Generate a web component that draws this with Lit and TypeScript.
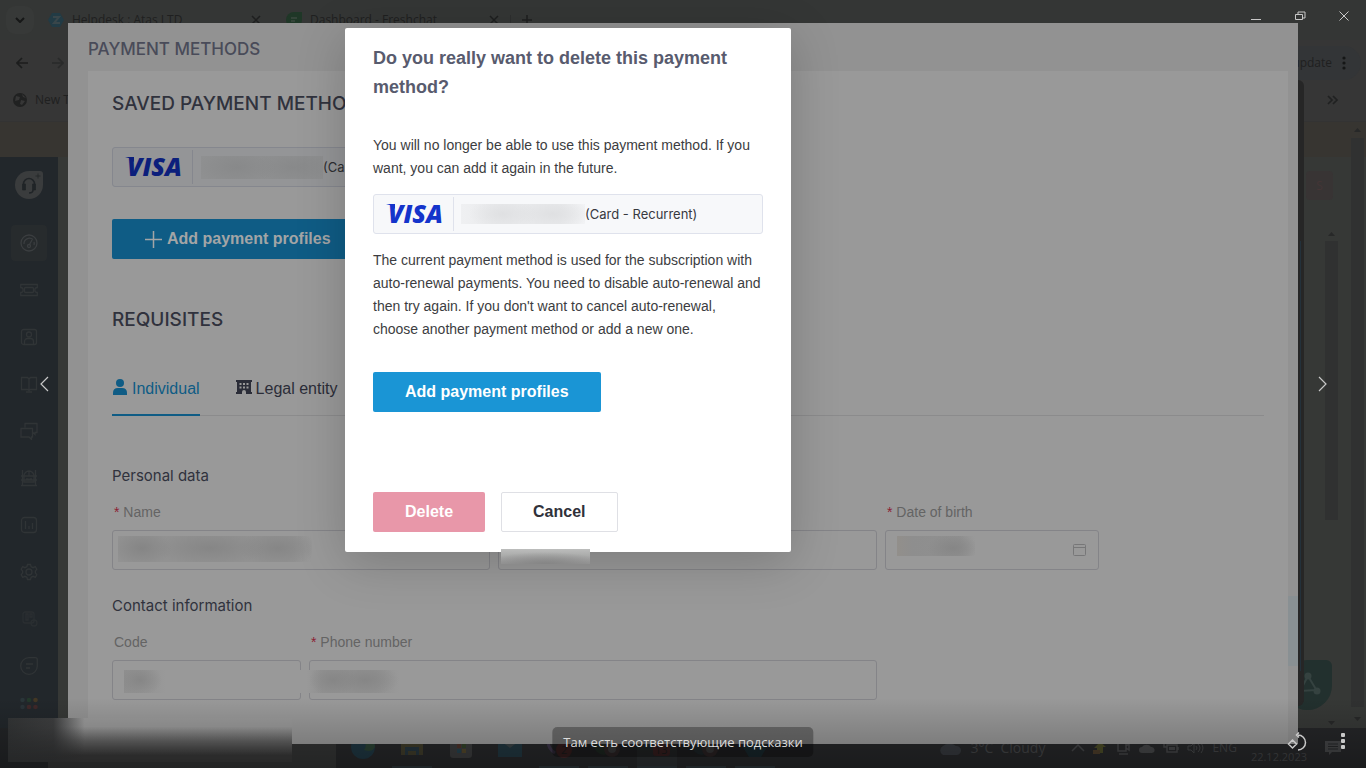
import { LitElement, html, css, svg, nothing } from "lit";
import { customElement, property } from "lit/decorators.js";

const icon = (w: number, h: number, body: unknown, cls = "ico") =>
  html`<svg class=${cls} width=${w} height=${h} viewBox="0 0 ${w} ${h}" aria-hidden="true">${body}</svg>`;

const railIcons = [
  svg`<circle cx="9" cy="9" r="8"/><path d="M4 10a5.500 5.500 0 0 1 9-4.500M9.500 10.500L12 6M14 8a5 5 0 0 1 0 3"/><circle cx="9" cy="12" r="1.500"/>`,
  svg`<path d="M.7 3.500h16.600v3a2.500 2.500 0 0 0 0 5v3H.7v-3a2.500 2.500 0 0 0 0-5z"/><rect x="4.500" y="6.500" width="9" height="5" rx="1"/>`,
  svg`<rect x="1.500" y="1.500" width="15" height="15" rx="2"/><circle cx="9" cy="6.500" r="2.500"/><path d="M4.500 16.500v-3a3 3 0 0 1 3-3h3a3 3 0 0 1 3 3v3"/>`,
  svg`<path d="M1.500 2.500h6L9 4l1.500-1.500h6v12h-6L9 15.500l-1.500-1h-6zM9 4v11M6 17h6"/>`,
  svg`<path d="M5 5.500v-4h12v9h-2v2l-2-2M1 6.500h11.500v8.500h-1v2.500l-2.500-2.500H1z"/>`,
  svg`<path d="M2.500 1v16M15.500 1v16M1 16.500h16M4 7a5 5 0 0 1 10 0v6H4zM1 7h16M1 11h16M9 2v5M6 10h2l1 1 1-1h2"/>`,
  svg`<rect x="1.500" y="1.500" width="15" height="15" rx="3"/><path d="M5.500 5v8M9 10v3M12.500 7v6"/>`,
  svg`<circle cx="9" cy="9" r="3"/><path d="M7.500 1.500h3l.6 2.200 2 1 2.200-1 1.500 2.600-1.400 1.700v2l1.400 1.700-1.500 2.600-2.200-1-2 1-.6 2.200h-3l-.6-2.200-2-1-2.200 1-1.500-2.600L2.600 10V8L1.200 6.300l1.500-2.600 2.200 1 2-1z"/>`,
  svg`<g opacity=".6"><rect x="3" y="2" width="11" height="11" rx="2"/><path d="M6 4h2v6H6zM10 4h2v3h-2z"/><circle cx="14" cy="13" r="3"/></g>`,
  svg`<path d="M9 .7h6.300a2 2 0 0 1 2 2V9A8.300 8.300 0 1 1 9 .7zM6 7h7M6 11h4"/>`,
];

@customElement("desktop-layer")
class DesktopLayer extends LitElement {
  static styles = css`
    :host { display: flex; flex-direction: column; min-width: 0; height: 100vh; background: #363636; color: #1f2020; font: 12px/16px "Open Sans", "Noto Sans", sans-serif; }
    svg { display: block; flex: none; }
    .tabs { display: flex; align-items: center; height: 40px; background: #343635; padding: 0 6px; }
    .search { display: grid; place-items: center; width: 28px; height: 28px; border-radius: 9px; background: #373938; margin-right: 6px; }
    .tab { display: flex; align-items: center; gap: 8px; box-sizing: border-box; width: 232px; padding: 0 11px 0 8px; }
    .tab span { flex: 1; white-space: nowrap; }
    .tab.next { width: 238px; padding-left: 14px; }
    .plus { border-left: 1px solid #2d2e2e; padding-left: 11px; }
    .bar { display: flex; align-items: center; height: 46px; padding: 0 5px 0 16px; gap: 24px; }
    .update { display: flex; align-items: center; justify-content: flex-end; gap: 10px; height: 34px; width: 90px; padding-right: 15px; margin-left: auto; border-radius: 17px; background: #333537; }
    .marks { display: flex; align-items: center; gap: 8px; height: 28px; padding: 0 27px 0 13px; }
    .marks svg:last-child { margin-left: auto; }
    .band { height: 36px; flex: none; background: #373531; border-top: 1px solid #333; box-sizing: border-box; margin-top: 7px; }
    .page { flex: 1; display: flex; justify-content: space-between; min-height: 0; background: #363836; }
    .rail { width: 58px; background: #22272b; display: flex; flex-direction: column; align-items: center; overflow: hidden; }
    .logo { margin: 13px 0 20px; }
    .cell { flex: none; display: grid; place-items: center; width: 36px; height: 36px; margin: 5px 0 6px; border-radius: 4px; }
    .cell.on { background: #272b2d; }
    .ico { fill: none; stroke: #303436; stroke-width: 1.3px; }
    .on .ico { stroke: #3b3e40; }
    .side { position: relative; width: 68px; }
    .device { position: absolute; left: 0; top: -77px; width: 6px; height: 626px; background: #262626; border-radius: 0 6px 6px 0; }
    .device::after { content: ""; position: absolute; left: 2px; top: 161px; width: 1px; height: 430px; background: #23313b; }
    .badge { position: absolute; left: 8px; top: 14px; width: 27px; height: 29px; line-height: 29px; border-radius: 4px; background: #383434; color: #443536; text-align: center; }
    .inner { position: absolute; left: 27px; top: 84px; width: 13px; height: 279px; background: #303131; }
    .outer { position: absolute; left: 53px; top: -19px; width: 13px; height: 569px; background: #303131; }
    .chat { position: absolute; left: -15px; top: 503px; width: 49px; height: 50px; border-radius: 25px 6px 25px 25px; background: #22302e; }
    .arrow { position: absolute; width: 7px; height: 4px; background: #272828; clip-path: polygon(0 100%, 50% 0, 100% 100%); }
    .arrow.down { clip-path: polygon(0 0, 50% 100%, 100% 0); }
    .a1 { left: 56px; top: -29px; }
    .a2 { left: 30px; top: 75px; }
    .a3 { left: 56px; top: 560px; }
    .a4 { left: 30px; top: 564px; }
    .task { display: flex; align-items: center; height: 40px; background: #252628; color: #414244; padding-right: 25px; }
    .start { width: 48px; align-self: stretch; background: #232527; }
    .find { width: 288px; align-self: stretch; background: #323333; }
    .apps { display: flex; align-self: stretch; padding-left: 7px; }
    .app { display: grid; place-items: center; width: 40px; margin-right: 9px; border-bottom: 2px solid transparent; }
    .app.run { border-color: #2c3438; }
    .app.on { background: #2a2d2f; }
    .tray { margin-left: auto; display: flex; align-items: center; gap: 8px; }
    .temp { font-size: 14px; margin-right: 18px; white-space: pre; }
    .clock { font-size: 11px; line-height: 18px; text-align: center; margin: 0 10px 0 6px; }
  `;

  render() {
    const x = icon(10, 10, svg`<path d="M1 1l8 8M9 1L1 9" stroke="#1e1f1f" stroke-width="1.5"/>`);
    return html`
      <div class="tabs">
        <div class="search">${icon(10, 6, svg`<path d="M1 1l4 4 4-4" fill="none" stroke="#161717" stroke-width="2"/>`, "")}</div>
        <div class="tab">
          ${icon(16, 16, svg`<path d="M4 1h8l4 7-4 7H4L0 8z" fill="#223b45"/><path d="M5 5h6l-5 6h6" fill="none" stroke="#39464a" stroke-width="2"/>`, "")}
          <span>Helpdesk : Atas LTD</span>${x}
        </div>
        <div class="tab next">
          ${icon(16, 16, svg`<path d="M8 0h8v8a8 8 0 1 1-8-8z" fill="#1f3727"/><path d="M5 6h6M5 9h4" stroke="#3d4a40" stroke-width="1.500"/>`, "")}
          <span>Dashboard - Freshchat</span>${x}
        </div>
        <div class="plus">${icon(10, 10, svg`<path d="M5 0v10M0 5h10" stroke="#1e1f1f" stroke-width="1.500"/>`, "")}</div>
      </div>
      <div class="bar">
        ${icon(12, 12, svg`<path d="M12 6H1M6 1L1 6l5 5" fill="none" stroke="#1c1d1d" stroke-width="1.700"/>`, "")}
        ${icon(12, 12, svg`<path d="M0 6h11M6 1l5 5-5 5" fill="none" stroke="#292a2a" stroke-width="1.700"/>`, "")}
        <div class="update"><span>update</span>${icon(4, 16, svg`<g fill="#151616"><circle cx="2" cy="3" r="1.600"/><circle cx="2" cy="8" r="1.600"/><circle cx="2" cy="13" r="1.600"/></g>`, "")}</div>
      </div>
      <div class="marks">
        ${icon(14, 14, svg`<circle cx="7" cy="7" r="7" fill="#202121"/><path d="M3 3l4 1-1 3-4 1M8 7l4 1-3 4-2-1zM9 1l1 3 3 1" fill="#363636"/>`, "")}
        <span>New Tab</span>
        ${icon(12, 10, svg`<path d="M1 1l4 4-4 4M6 1l4 4-4 4" fill="none" stroke="#202121" stroke-width="1.700"/>`, "")}
      </div>
      <div class="band"></div>
      <div class="page">
        <nav class="rail">
          ${icon(30, 30, svg`<path d="M15 1h11a3 3 0 0 1 3 3v11A14 14 0 1 1 15 1z" fill="#3a3c3d"/><path d="M9.500 18v-4a5.500 5.500 0 0 1 11 0v4M19 20q0 3-4 3" fill="none" stroke="#202427" stroke-width="1.500"/><path d="M8.500 14h3v6h-3zM18.500 14h3v6h-3zM24 3.500v5M21.500 6h5" fill="#202427" stroke="#202427" stroke-width=".7"/>`, "logo")}
          ${railIcons.map((g, i) => html`<div class="cell ${i === 0 ? "on" : ""}">${icon(18, 18, g)}</div>`)}
          ${icon(18, 20, svg`<g><circle cx="2.500" cy="10" r="2.300" fill="#2a3539"/><circle cx="9" cy="10" r="2.300" fill="#23382b"/><circle cx="15.500" cy="10" r="2.300" fill="#433724"/><circle cx="2.500" cy="17" r="2.300" fill="#2a3338"/><circle cx="9" cy="17" r="2.300" fill="#3f2829"/><circle cx="15.500" cy="17" r="2.300" fill="#3f2829"/></g>`, "")}
        </nav>
        <div class="side">
          <div class="badge">S</div><div class="inner"></div><div class="outer"></div>
          <div class="arrow a1"></div><div class="arrow a2"></div><div class="arrow down a3"></div><div class="arrow down a4"></div>
          <div class="chat">${icon(49, 50, svg`<path d="M25 16l9 15M25 16l-8 15 17-1" fill="none" stroke="#354240" stroke-width="2"/><g fill="#354240"><circle cx="25" cy="16" r="3.500"/><circle cx="34" cy="31" r="3.500"/></g>`, "")}</div>
          <div class="device"></div>
        </div>
      </div>
      <div class="task">
        <div class="start"></div><div class="find"></div>
        <div class="apps">
          <div class="app">${icon(24, 24, svg`<circle cx="12" cy="12" r="12" fill="#1e3540"/><path d="M12 4a10 8 0 0 1 12 8q-3 6-11 3 4-5-1-11" fill="#294032"/>`, "")}</div>
          <div class="app run">${icon(22, 20, svg`<path d="M0 0h22v18H0z" fill="#3d3a29"/><path d="M4 10h14v8h-3v-4H7v4H4z" fill="#24333c"/>`, "")}</div>
          <div class="app">${icon(22, 22, svg`<rect width="22" height="22" rx="3" fill="#393a3b"/><path d="M7 8h4v4H7z" fill="#4b3028"/><path d="M12 8h4v4h-4z" fill="#304027"/><path d="M7 13h4v4H7z" fill="#24404c"/><path d="M12 13h4v4h-4z" fill="#504529"/>`, "")}</div>
          <div class="app">${icon(24, 22, svg`<path d="M0 3h24v18H0z" fill="#20353e"/><path d="M0 3l12 9 12-9z" fill="#384144"/>`, "")}</div>
          <div class="app run">${icon(28, 26, svg`<path d="M4 4q-3 9 6 15" fill="none" stroke="#393245" stroke-width="3"/><circle cx="19" cy="16" r="8" fill="#432526"/><text x="16" y="20" fill="#222" font-size="11">2</text>`, "")}</div>
          <div class="app run">${icon(28, 26, svg`<circle cx="10" cy="11" r="10" fill="#263129"/><circle cx="18" cy="15" r="8" fill="#382d2e"/><circle cx="18" cy="15" r="4" fill="#464647"/>`, "")}</div>
          <div class="app run on">${icon(28, 26, svg`<path d="M5 0h19v14H5z" fill="#203139"/><rect x="10" y="10" width="17" height="12" rx="3" fill="#462728"/><text x="12" y="20" fill="#222" font-size="11">13</text>`, "")}</div>
          <div class="app run">${icon(28, 26, svg`<circle cx="10" cy="11" r="10" fill="#252e32"/><circle cx="18" cy="15" r="8" fill="#382d2e"/><circle cx="18" cy="15" r="4" fill="#464647"/>`, "")}</div>
          <div class="app run">${icon(24, 22, svg`<path d="M6 1h12l6 10-6 10H6L0 11z" fill="#20343a"/>`, "")}</div>
        </div>
        <div class="tray">
          ${icon(24, 14, svg`<path d="M5 14a5 5 0 0 1 0-9 8 6 0 0 1 13 0 4.500 4.500 0 0 1 1 9z" fill="#34373c"/>`, "")}
          <span class="temp">3°C  Cloudy</span>
          ${icon(14, 8, svg`<path d="M1 7l6-6 6 6" fill="none" stroke="#434446" stroke-width="1.500"/>`, "")}
          ${icon(14, 14, svg`<path d="M7 1l6 5h-3v6H4V7H1z" fill="#494a26"/><path d="M0 9h7v4H0z" fill="#4a3b29"/>`, "")}
          ${icon(16, 14, svg`<path d="M3 2h8v8H3zM11 5l3-2v6l-3-2M4 13h9" fill="none" stroke="#434446" stroke-width="1.500"/>`, "")}
          ${icon(16, 10, svg`<path d="M3 10a3 3 0 0 1 0-6 5 4 0 0 1 9 0 3 3 0 0 1 1 6z" fill="#434446"/>`, "")}
          ${icon(16, 10, svg`<path d="M4 2h10v7H4zM15 4v3M1 0v4h3" fill="none" stroke="#434446" stroke-width="1.500"/><path d="M6 4h6v3H6z" fill="#434446"/>`, "")}
          ${icon(17, 12, svg`<path d="M1 4h3l3-3v10L4 8H1zM9 4q2 2 0 4M11 2q4 4 0 8M14 1q4 5 0 10" fill="none" stroke="#434446"/>`, "")}
          <span>ENG</span>
          <span class="clock">14:07<br />22.12.2023</span>
          ${icon(16, 16, svg`<path d="M0 1h16v11h-9l-3 3v-3H0z" fill="#434446"/><path d="M3 4h10M3 6.500h10M3 9h10" stroke="#252628"/>`, "")}
        </div>
      </div>
    `;
  }
}

@customElement("card-row")
class CardRow extends LitElement {
  @property({ type: Boolean, reflect: true }) dim = false;
  static styles = css`
    :host { display: flex; align-items: center; box-sizing: border-box; height: 40px; max-width: 390px; border: 1px solid #dfe2ec; border-radius: 3px; background: #f7f8fa; color: #37393f; font: 13px/20px Inter, sans-serif; }
    :host([dim]) { background: #949597; border-color: #85878e; color: #2d2e31; }
    .brand { position: relative; box-sizing: border-box; width: 80px; height: 34px; padding-left: 14px; border-right: 1px solid #dfe2ec; color: #1434cb; font: italic 800 25px/32px "Open Sans", sans-serif; }
    :host([dim]) .brand { border-color: #85878e; color: #0c1f7c; }
    .brand::before { content: ""; position: absolute; left: 12px; top: 7px; width: 9px; height: 5px; background: currentColor; clip-path: polygon(0 0, 100% 0, 100% 100%, 60% 30%); }
    .mask { width: 124px; height: 20px; margin-left: 7px; background: radial-gradient(ellipse 34px 16px at 42px 10px, #dfe0e2, transparent), radial-gradient(ellipse 40px 16px at 92px 10px, #dfe0e2, transparent), linear-gradient(90deg, #eff0f2, #e9eaec 30%, #e9eaec 80%, #f3f4f6); }
    :host([dim]) .mask { height: 23px; width: 122px; margin-left: 8px; background: radial-gradient(ellipse 40px 18px at 36px 11px, #88898a, transparent), radial-gradient(ellipse 40px 18px at 92px 11px, #88898a, transparent), #8f9091; }
    .kind { white-space: nowrap; }
  `;
  render() {
    return html`<div class="brand">VISA</div><div class="mask"></div><span class="kind">(Card - Recurrent)</span>`;
  }
}

@customElement("payment-page")
class PaymentPage extends LitElement {
  static styles = css`
    :host { display: block; box-sizing: border-box; height: 100%; overflow: hidden; padding: 14px 10px 0 20px; background: #929292; color: #30323d; font: 16px/24px "Liberation Sans", Arial, sans-serif; }
    h1, h2, h3 { margin: 0; font: 500 19px/24px Inter, sans-serif; }
    h1 { color: #494b59; font-size: 17px; margin-bottom: 10px; }
    h3 { font-size: 15px; font-weight: 400; margin-bottom: 14px; }
    .panel { background: #999; padding: 21px 24px; min-height: 640px; }
    card-row { margin: 31px 0 32px; }
    button { font: inherit; cursor: pointer; }
    .add { display: flex; align-items: center; gap: 4px; height: 40px; padding: 0 32px; border: 0; border-radius: 2px; background: #0f5c85; color: #a3a5a6; font-weight: 700; margin-bottom: 49px; }
    .tabs { display: flex; gap: 36px; margin: 44px 0 48px; box-shadow: inset 0 -1px #8b8b8c; }
    .tabs button { display: flex; align-items: center; gap: 4px; box-sizing: border-box; height: 40px; padding: 0 0 12px; border: 0; border-bottom: 2px solid transparent; background: none; color: #2b2d38; }
    .tabs svg { margin-bottom: 4px; }
    .tabs .on { color: #0f5c85; border-color: #0f5c85; }
    .row { position: relative; display: grid; gap: 8px; margin-bottom: 24px; }
    .three { grid-template-columns: 378fr 379fr 214fr; max-width: 987px; }
    .two { grid-template-columns: 189fr 568fr; max-width: 765px; }
    label { display: block; padding-left: 2px; margin-bottom: 8px; font-size: 14px; line-height: 20px; color: #646464; }
    .req { color: #8c1e33; }
    .box { position: relative; }
    input { display: block; box-sizing: border-box; width: 100%; height: 40px; padding: 0 11px; border: 1px solid #848488; border-radius: 3px; background: transparent; font: inherit; outline: none; }
    .box svg { position: absolute; right: 13px; top: 13px; }
    .smudge { position: absolute; }
    .name { left: 6px; top: 6px; width: 194px; height: 26px; background: radial-gradient(ellipse 30px 18px at 24px 12px, #858585, transparent), radial-gradient(ellipse 56px 18px at 92px 12px, #868686, transparent), radial-gradient(ellipse 40px 18px at 160px 12px, #868686, transparent), linear-gradient(90deg, #929292 90%, #999); }
    .birth { left: 12px; top: 6px; width: 78px; height: 20px; background: radial-gradient(ellipse 26px 14px at 56px 12px, #868686, transparent), linear-gradient(90deg, #928f8b, #8e8e8e 20%, #909090 80%, #999); }
    .code { left: 12px; top: 10px; width: 42px; height: 23px; background: radial-gradient(ellipse 22px 16px at 16px 10px, #868686, transparent), linear-gradient(90deg, #8f8f8f, #999); }
    .phone { left: -20px; top: 10px; width: 110px; height: 23px; background: radial-gradient(ellipse 24px 16px at 44px 10px, #868686, transparent), radial-gradient(ellipse 34px 16px at 76px 10px, #868686, transparent), linear-gradient(90deg, #999 16%, #919191 30%, #919191 80%, #999); }
  `;
  private field(id: string, text: string, req: boolean, cls: string, extra: unknown = nothing) {
    return html`<div>
      <label for=${id}>${req ? html`<span class="req">*</span> ` : nothing}${text}</label>
      <div class="box"><input id=${id} type="text" />${cls ? html`<div class="smudge ${cls}"></div>` : nothing}${extra}</div>
    </div>`;
  }
  render() {
    return html`
      <h1>PAYMENT METHODS</h1>
      <div class="panel">
        <h2>SAVED PAYMENT METHODS</h2>
        <card-row dim></card-row>
        <button class="add">${icon(19, 19, svg`<path d="M9.500 1v17M1 9.500h17" stroke="#a3a5a6" stroke-width="1.500"/>`)}Add payment profiles</button>
        <h2>REQUISITES</h2>
        <div class="tabs" role="tablist">
          <button class="on" role="tab">${icon(16, 18, svg`<circle cx="8" cy="5" r="4" fill="#0f5c85"/><path d="M1 17v-2q0-5 5-5h4q5 0 5 5v2z" fill="#0f5c85"/>`)}Individual</button>
          <button role="tab">${icon(16, 18, svg`<path d="M0 2h16v2h-1v10h1v2h-6v-2a2 2 0 0 0-4 0v2H0v-2h1V4H0z" fill="#2b2d38"/><path d="M3.500 5h2v2h-2zM7 5h2v2H7zM10.500 5h2v2h-2zM3.500 8.500h2v2h-2zM7 8.500h2v2H7zM10.500 8.500h2v2h-2z" fill="#999"/>`)}Legal entity</button>
        </div>
        <h3>Personal data</h3>
        <div class="row three">
          ${this.field("name", "Name", true, "name")}
          ${this.field("surname", "Surname", true, "")}
          ${this.field("birth", "Date of birth", true, "birth", icon(13, 14, svg`<rect x=".5" y="1.500" width="12" height="11" rx="1" fill="none" stroke="#777778"/><path d="M1 4.500h11" stroke="#777778"/>`))}
        </div>
        <h3>Contact information</h3>
        <div class="row two">
          ${this.field("code", "Code", false, "code")}
          ${this.field("phone", "Phone number", true, "phone")}
        </div>
      </div>`;
  }
}

@customElement("confirm-dialog")
class ConfirmDialog extends LitElement {
  static styles = css`
    :host { display: block; box-sizing: border-box; padding: 16px 28px 20px; border-radius: 2px; background: #fff; color: #3c3d41; box-shadow: 0 10px 50px rgba(0, 0, 0, 0.2); font: 14px/23px "Liberation Sans", Arial, sans-serif; }
    h2 { margin: 0 0 32px; font-size: 18px; line-height: 29px; color: #585b6e; }
    p { margin: 0; }
    card-row { margin: 14px 0 15px; }
    button { box-sizing: border-box; height: 40px; padding: 0 32px; border: 0; border-radius: 2px; font: 700 16px/24px "Liberation Sans", Arial, sans-serif; color: #fff; cursor: pointer; }
    .add { display: block; margin: 31px 0 80px; background: #1a95d5; }
    .actions { display: flex; gap: 16px; }
    .delete { background: #e897a9; }
    .cancel { background: #fff; border: 1px solid #dfe0e5; padding: 0 31px; color: #30313a; }
  `;
  render() {
    return html`
      <h2>Do you really want to delete this payment method?</h2>
      <p>You will no longer be able to use this payment method. If you want, you can add it again in the future.</p>
      <card-row></card-row>
      <p>The current payment method is used for the subscription with auto-renewal payments. You need to disable auto-renewal and then try again. If you don't want to cancel auto-renewal, choose another payment method or add a new one.</p>
      <button class="add">Add payment profiles</button>
      <div class="actions"><button class="delete">Delete</button><button class="cancel">Cancel</button></div>`;
  }
}

@customElement("app-root")
class AppRoot extends LitElement {
  static styles = css`
    :host { display: block; position: relative; height: 100vh; overflow: hidden; }
    .photo { position: absolute; inset: 23px 68px 24px; }
    confirm-dialog { position: absolute; left: 277px; top: 5px; width: 446px; }
    .mark { position: absolute; right: 0; top: 573px; width: 10px; height: 70px; background: #899093; }
    .smear { position: absolute; left: 433px; top: 526px; width: 89px; height: 15px; background: radial-gradient(ellipse 60px 12px at 44px 15px, #858585, transparent), linear-gradient(#bcbdbc, #959595); }
    .haze { position: absolute; left: 8px; bottom: 6px; width: 284px; height: 44px; background: linear-gradient(90deg, #333536, rgba(52, 53, 54, 0.9) 16%, transparent 27%), linear-gradient(#9a9a9a 20%, #646464 52%, #383838 85%); }
    .shade { position: absolute; inset: auto 0 0; height: 70px; background: linear-gradient(transparent, rgba(0, 0, 0, 0.28)); pointer-events: none; }
    button { position: absolute; display: grid; place-items: center; width: 44px; height: 32px; padding: 0; border: 0; background: none; cursor: pointer; }
    svg { fill: none; stroke: #c8c8c8; }
    .prev { left: 22px; top: calc(50% - 16px); }
    .next { right: 21px; top: calc(50% - 16px); }
    .min { right: 88px; top: 0; }
    .max { right: 44px; top: 0; }
    .close { right: 0; top: 0; }
    .turn { right: 47px; bottom: 10px; }
    .more { right: 1px; bottom: 11px; }
    .caption { position: absolute; left: 50%; bottom: 11px; transform: translateX(-50%); padding: 5px 11px; border-radius: 5px; background: rgba(0, 0, 0, 0.3); color: #dcdcdc; font: 13px/20px "Open Sans", "Noto Sans", sans-serif; white-space: nowrap; }
  `;
  render() {
    return html`
      <desktop-layer></desktop-layer>
      <div class="photo">
        <payment-page></payment-page>
        <div class="mark"></div>
        <confirm-dialog role="dialog"></confirm-dialog>
        <div class="smear"></div>
      </div>
      <div class="haze"></div>
      <div class="shade"></div>
      <button class="prev" aria-label="Previous">${icon(10, 16, svg`<path d="M9 1L2 8l7 7" stroke-width="1.200"/>`)}</button>
      <button class="next" aria-label="Next">${icon(10, 16, svg`<path d="M1 1l7 7-7 7" stroke-width="1.200"/>`)}</button>
      <button class="min" aria-label="Minimize">${icon(10, 10, svg`<path d="M0 8.500h10"/>`)}</button>
      <button class="max" aria-label="Restore">${icon(12, 12, svg`<path d="M1.500 4.500h7v5h-7zM4 4V2h7v6H9"/>`)}</button>
      <button class="close" aria-label="Close">${icon(10, 10, svg`<path d="M.5.5l9 9M9.500.5l-9 9"/>`)}</button>
      <button class="turn" aria-label="Rotate">${icon(20, 20, svg`<path d="M11 3a7.500 7.500 0 1 1 0 15M12 .5L9.500 3 12 5.500M5.500 8l4 4-4 4-4-4z" stroke-width="1.500"/>`)}</button>
      <button class="more" aria-label="More">${icon(4, 16, svg`<g fill="#c8c8c8" stroke="none"><rect width="4" height="4" rx="1"/><rect y="6" width="4" height="4" rx="1"/><rect y="12" width="4" height="4" rx="1"/></g>`)}</button>
      <div class="caption">Там есть соответствующие подсказки</div>
    `;
  }
}
